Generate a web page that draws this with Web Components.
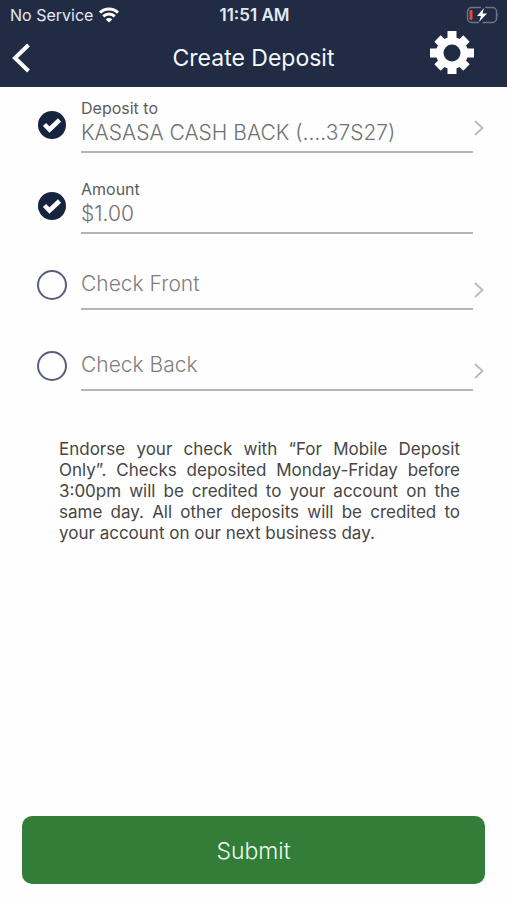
<!DOCTYPE html>
<html lang="en">
<head>
<meta charset="utf-8">
<meta name="viewport" content="width=device-width, initial-scale=1">
<title>Create Deposit</title>
<style>
  html, body { height: 100%; }
  body { margin: 0; background: #fefefe; font-family: Inter, "Liberation Sans", sans-serif; color: #464646; }
</style>
</head>
<body>
<deposit-screen></deposit-screen>

<template id="status-bar">
  <style>
    :host { display: grid; grid-template-columns: 1fr auto 1fr; align-items: center; height: 30px; padding: 0 8px 0 10px; color: #e4e9f2; font-size: 16px; line-height: 20px; }
    .carrier { display: flex; align-items: center; gap: 6px; }
    .time { font-weight: 600; font-size: 17px; }
    .battery { justify-self: end; }
    svg { display: block; }
  </style>
  <div class="carrier"><span>No Service</span>
    <svg width="20" height="16" viewBox="0 0 20 16" fill="none" stroke="#fff" stroke-width="3" role="img" aria-label="Wi-Fi">
      <path d="M1 5.6a13 13 0 0 1 18 0M4.3 9.3a8.2 8.2 0 0 1 11.4 0"/>
      <path d="M10 15.6 6.8 12.4a4.6 4.6 0 0 1 6.400 0z" fill="#fff" stroke="none"/>
    </svg>
  </div>
  <span class="time">11:51 AM</span>
  <svg class="battery" width="33" height="18" viewBox="0 0 33 18" role="img" aria-label="Battery low, charging">
    <path d="M15 1.500H5.500A4 4 0 0 0 1.500 5.500v7a4 4 0 0 0 4 4H13M19 1.500h7.500a4 4 0 0 1 4 4v7a4 4 0 0 1-4 4H16.500" fill="none" stroke="#6d7688" stroke-width="1.400"/>
    <path d="M31.500 6.500q1.500 2.500 0 5z" fill="#6d7688"/>
    <rect x="3.500" y="4" width="3" height="10" rx="1" fill="#f0433f"/>
    <path d="M18 2 11 10h4l-2 6 8-8.500h-4.500z" fill="#fff"/>
  </svg>
</template>

<template id="nav-bar">
  <style>
    :host { display: grid; grid-template-columns: 68px 1fr 68px; align-items: center; height: 57px; box-sizing: border-box; padding: 0 10px 2px; color: #f4f7fb; }
    h1 { margin: 0; text-align: center; font-size: 23px; line-height: 30px; font-weight: 400; }
    button { border: 0; background: none; padding: 0; color: #fff; cursor: pointer; justify-self: start; }
    .settings { align-self: start; }
    svg { display: block; }
  </style>
  <button type="button" aria-label="Back">
    <svg width="22" height="32" viewBox="0 0 22 32" fill="none" stroke="currentColor" stroke-width="4"><path d="M18.500 3 5 16l13.500 13"/></svg>
  </button>
  <h1><slot></slot></h1>
  <button type="button" class="settings" aria-label="Settings">
    <svg width="46" height="46" viewBox="-23 -23 46 46">
      <g fill="currentColor">
        <path d="M-4.500-22h9v43h-9z"/>
        <path d="M-4.500-22h9v44h-9z" transform="rotate(90)"/>
        <path d="M-4.500-20.500h9v41h-9z" transform="rotate(45)"/>
        <path d="M-4.500-20.500h9v41h-9z" transform="rotate(-45)"/>
        <circle r="16"/>
      </g>
      <circle r="8.500" fill="#212c44"/>
    </svg>
  </button>
</template>

<template id="step-row">
  <style>
    :host { display: grid; grid-template-columns: 44px minmax(0, 1fr) 12px; height: 81px; padding: 0 22px 0 37px; box-sizing: border-box; align-items: start; }
    .tick { display: grid; width: 30px; height: 72px; align-items: center; justify-items: center; }
    .tick > * { grid-area: 1 / 1; }
    .tick input { appearance: none; margin: 0; box-sizing: border-box; width: 30px; height: 30px; border: 2px solid #565f7d; border-radius: 50%; }
    .tick input:checked { width: 28px; height: 28px; border: 0; background: #17243f; }
    .tick svg { display: none; pointer-events: none; }
    .tick input:checked + svg { display: block; }
    .field { box-sizing: border-box; padding: 20px 0 9px; border-bottom: 2px solid #b4b4b4; }
    .chevron { display: flex; height: 81px; align-items: center; }
    :host([filled]) .tick { height: 76px; }
    :host([filled]) .field { padding: 12px 0 4px; }
    :host([plain]) .chevron { display: none; }
  </style>
  <div class="tick">
    <input type="checkbox">
    <svg width="20" height="16" viewBox="0 0 20 16" fill="none" stroke="#fff" stroke-width="4.500"><path d="m2.500 7.500 5 5L17.500 3"/></svg>
  </div>
  <div class="field"><slot></slot></div>
  <div class="chevron"><svg width="12" height="18" viewBox="0 0 12 18" fill="none" stroke="#bdbdbd" stroke-width="2"><path d="m2 2 7.500 7L2 16"/></svg></div>
</template>

<template id="deposit-screen">
  <style>
    :host { display: flex; flex-direction: column; min-height: 100vh; }
    header { background: #212c44; }
    form { flex: 1; display: flex; flex-direction: column; }
    label { display: block; padding-bottom: 2px; font-size: 16px; line-height: 18px; color: #5c5c5c; }
    .value { display: block; box-sizing: border-box; width: 100%; height: 28px; padding: 0; border: 0; background: none; text-align: left; font: 300 21px/28px Inter, "Liberation Sans", sans-serif; color: #727272; white-space: nowrap; outline: none; cursor: pointer; }
    .empty { height: 30px; line-height: 30px; color: #7e7e7e; }
    p { margin: 28px 47px 24px 59px; font-size: 17px; line-height: 21px; text-align: justify; }
    .submit { margin: auto 22px 16px; height: 68px; padding: 2px 0 0; border: 0; border-radius: 10px; background: #327e38; color: #eef8ee; font: 300 23px/30px Inter, "Liberation Sans", sans-serif; cursor: pointer; }
  </style>
  <header>
    <status-bar></status-bar>
    <nav-bar>Create Deposit</nav-bar>
  </header>
  <form>
    <step-row filled name="Deposit account chosen">
      <label for="account">Deposit to</label>
      <button type="button" class="value" id="account">KASASA CASH BACK (....37S27)</button>
    </step-row>
    <step-row filled plain name="Amount entered">
      <label for="amount">Amount</label>
      <input class="value" id="amount" inputmode="decimal" value="$1.00">
    </step-row>
    <step-row name="Check front captured"><button type="button" class="value empty">Check Front</button></step-row>
    <step-row name="Check back captured"><button type="button" class="value empty">Check Back</button></step-row>
    <p>Endorse your check with “For Mobile Deposit Only”. Checks deposited Monday-Friday before 3:00pm will be credited to your account on the same day. All other deposits will be credited to your account on our next business day.</p>
    <button type="button" class="submit">Submit</button>
  </form>
</template>

<script>
  class TemplateElement extends HTMLElement {
    constructor() {
      super();
      const template = document.getElementById(this.localName);
      this.attachShadow({ mode: "open" }).append(template.content.cloneNode(true));
    }
  }
  class StepRow extends TemplateElement {
    connectedCallback() {
      const box = this.shadowRoot.querySelector("input");
      box.checked = this.hasAttribute("filled");
      box.setAttribute("aria-label", this.getAttribute("name"));
    }
  }
  customElements.define("status-bar", class extends TemplateElement {});
  customElements.define("nav-bar", class extends TemplateElement {});
  customElements.define("step-row", StepRow);
  customElements.define("deposit-screen", class extends TemplateElement {});
</script>
</body>
</html>
